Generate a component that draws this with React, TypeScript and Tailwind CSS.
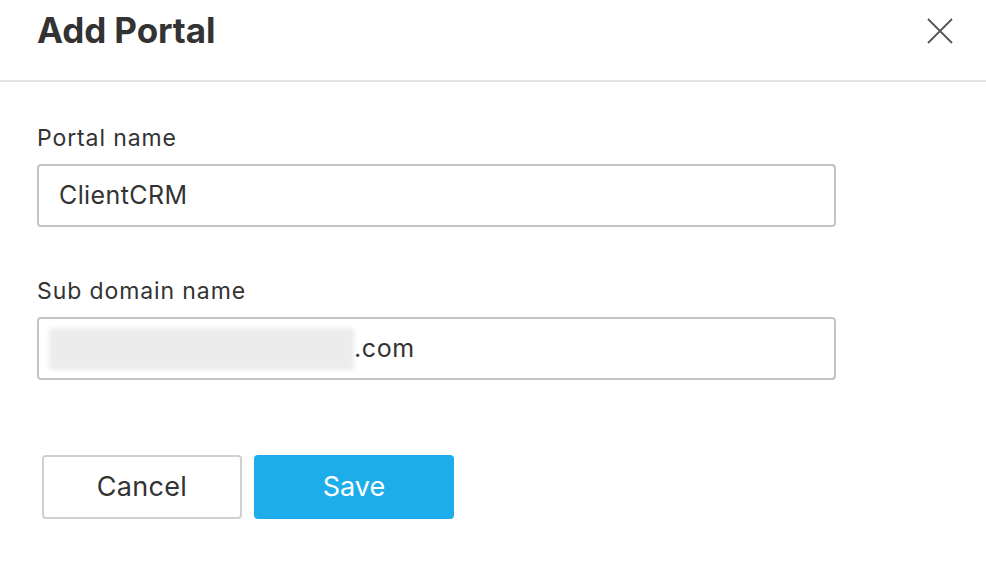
import React from 'react';

export default function App() {
  return (
    <div className="w-[986px] h-[566px] bg-white text-[#333] [font-family:Inter,'Liberation_Sans',sans-serif]">
      {/* Header */}
      <div className="h-[82px] flex items-start justify-between border-b-2 border-[#e3e3e3] pl-[37px] pr-[33px]">
        <h1 className="mt-[9px] text-[35px] leading-[42px] font-bold tracking-[-0.1px] text-[#333]">Add Portal</h1>
        <button className="mt-[18px] w-[26px] h-[26px] text-[#555]">
          <svg viewBox="0 0 26 26" className="w-[26px] h-[26px]" fill="none" stroke="currentColor" strokeWidth="1.8">
            <path d="M1 1 L25 25 M25 1 L1 25" />
          </svg>
        </button>
      </div>

      {/* Form */}
      <div className="pl-[37px] pt-[40px]">
        <label className="block text-[23px] leading-[32px] tracking-[0.9px] text-[#333]">Portal name</label>
        <div className="mt-[10px] w-[799px] h-[63px] border-2 border-[#c4c4c4] rounded-[4px] flex items-center pl-[20px] text-[25px] tracking-[0.4px]">
          ClientCRM
        </div>

        <label className="block mt-[48px] text-[23px] leading-[32px] tracking-[0.9px] text-[#333]">Sub domain name</label>
        <div className="mt-[10px] w-[799px] h-[63px] border-2 border-[#c4c4c4] rounded-[4px] flex items-center pl-[10px] text-[25px] tracking-[0.6px]">
          <span className="w-[305px] h-[42px] bg-[#ececec] blur-[2px] rounded-[2px]" />
          <span>.com</span>
        </div>

        <div className="mt-[75px] ml-[5px] flex gap-[12px]">
          <button className="w-[200px] h-[64px] border-2 border-[#d0d0d0] rounded-[4px] text-[27px] tracking-[0.3px] text-[#333] bg-white">
            Cancel
          </button>
          <button className="w-[200px] h-[64px] rounded-[4px] bg-[#1eadeb] text-[27px] text-white">
            Save
          </button>
        </div>
      </div>
    </div>
  );
}
